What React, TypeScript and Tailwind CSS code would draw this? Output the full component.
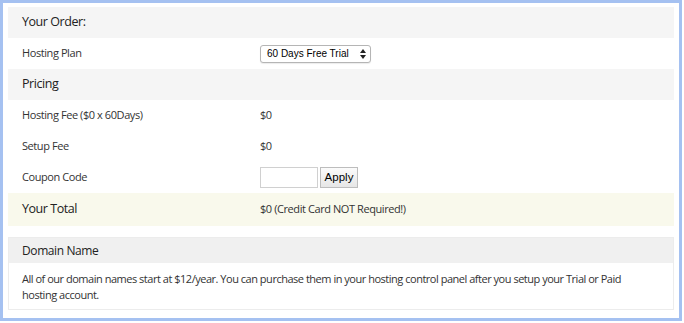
import React from "react";

const font = { fontFamily: '"Open Sans", "Noto Sans", sans-serif' };

function Row({ label, children }: { label: string; children?: React.ReactNode }) {
  return (
    <div className="flex h-[31px] items-center bg-white">
      <div className="w-[252px] pl-[14px] text-[11px] tracking-[-0.42px] text-[#333]">{label}</div>
      <div className="flex items-center text-[11px] tracking-[-0.42px] text-[#333]">{children}</div>
    </div>
  );
}

function Header({ label }: { label: string }) {
  return (
    <div className="flex h-[31px] items-center bg-[#f5f5f5] pl-[14px] text-[12.5px] tracking-[-0.45px] text-[#222]">
      {label}
    </div>
  );
}

export default function App() {
  return (
    <div className="w-[684px] h-[323px] bg-white" style={font}>
      <div className="w-[682px] h-[321px] border-[3px] border-[#a5c1f1] bg-white px-[5px] pt-[4px]">
        <div className="flex flex-col">
          <Header label="Your Order:" />
          <Row label="Hosting Plan">
            <div
              className="flex h-[18px] w-[111px] items-center justify-between whitespace-nowrap rounded-[3px] border border-[#b5b5b5] bg-white pl-[6px] pr-[4px] text-[10px] tracking-normal text-black shadow-[0_1px_1px_rgba(0,0,0,0.08)]"
              style={{ fontFamily: '"Liberation Sans", Arial, sans-serif' }}
            >
              <span>60 Days Free Trial</span>
              <svg width="6" height="10" viewBox="0 0 6 10">
                <path d="M0 4 L3 0 L6 4 Z" fill="#222" />
                <path d="M0 6 L3 10 L6 6 Z" fill="#222" />
              </svg>
            </div>
          </Row>
          <Header label="Pricing" />
          <Row label="Hosting Fee ($0 x 60Days)">$0</Row>
          <Row label="Setup Fee">$0</Row>
          <Row label="Coupon Code">
            <div className="h-[21px] w-[58px] border border-[#d0d0d0] bg-white" />
            <div
              className="ml-[2px] flex h-[21px] w-[38px] items-center justify-center border border-[#bdbdbd] bg-gradient-to-b from-[#fbfbfb] to-[#e6e6e6] text-[11.5px] tracking-normal text-black"
              style={{ fontFamily: '"Liberation Sans", Arial, sans-serif' }}
            >
              Apply
            </div>
          </Row>
          <div className="flex h-[33px] items-center bg-[#f9f9ec]">
            <div className="w-[252px] pl-[14px] text-[12.5px] tracking-[-0.45px] text-[#222]">Your Total</div>
            <div className="text-[11px] tracking-[-0.42px] text-[#333]">$0 (Credit Card NOT Required!)</div>
          </div>
        </div>
        <div className="mt-[11px] border border-[#ececec]">
          <div className="flex h-[25px] items-center bg-[#f0f0f0] pl-[13px] text-[12px] tracking-[-0.4px] text-[#222]">
            Domain Name
          </div>
          <div className="bg-white pl-[13px] pr-[30px] pt-[8px] pb-[6px] text-[11px] leading-[16px] tracking-[-0.48px] text-[#333]">
            All of our domain names start at $12/year. You can purchase them in your hosting control panel after you setup your Trial or Paid hosting account.
          </div>
        </div>
      </div>
    </div>
  );
}
